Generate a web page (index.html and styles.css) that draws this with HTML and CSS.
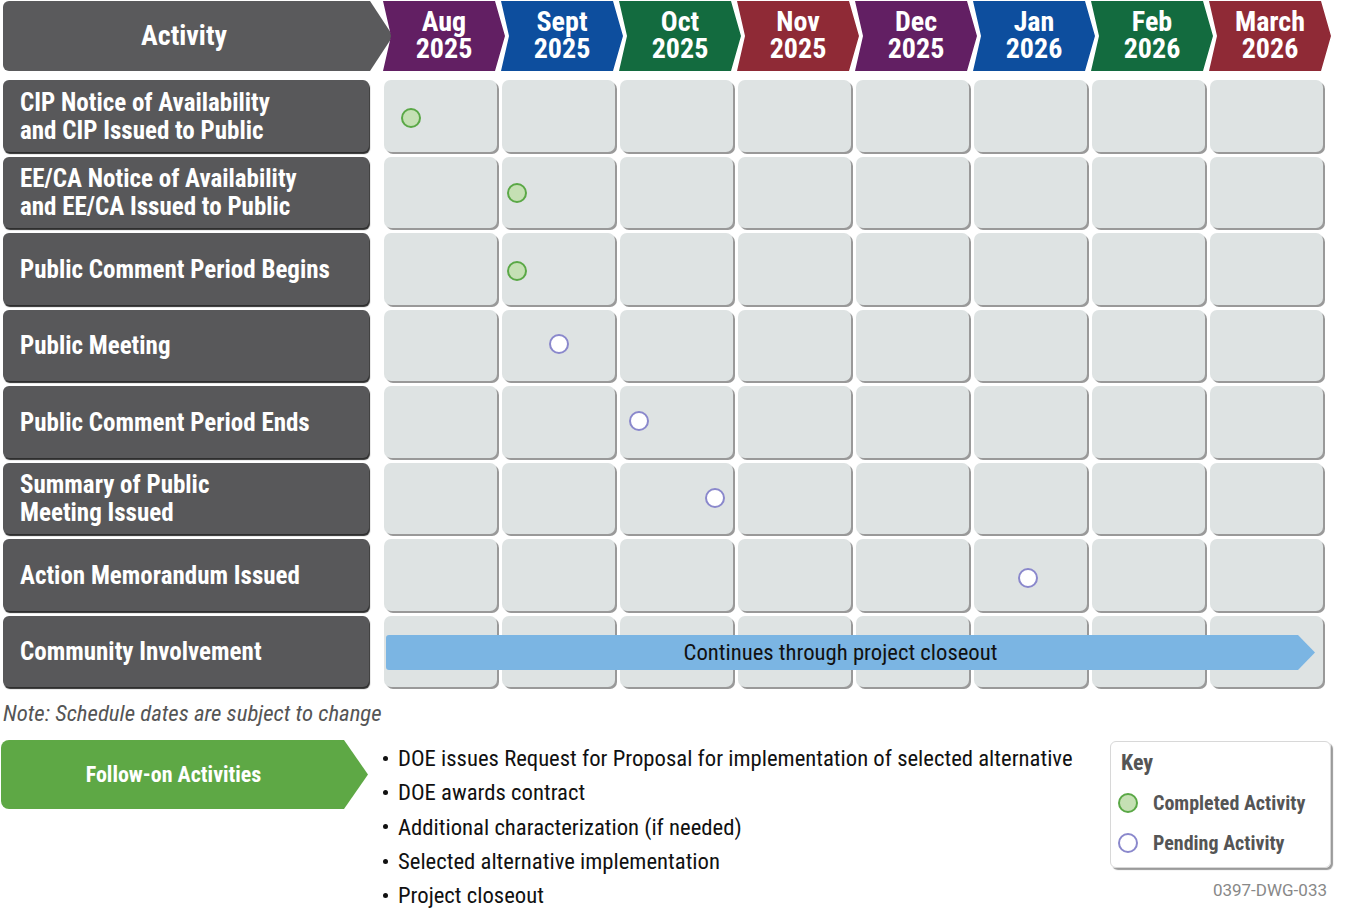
FILE: index.html
```html
<!DOCTYPE html>
<html>
<head>
<meta charset="utf-8">
<link rel="stylesheet" href="styles.css">
</head>
<body>
<div class="page">
  <div class="header">
    <div class="hd-activity">Activity</div>
    <div class="month purple"><span>Aug</span><span>2025</span></div>
    <div class="month blue"><span>Sept</span><span>2025</span></div>
    <div class="month green"><span>Oct</span><span>2025</span></div>
    <div class="month red"><span>Nov</span><span>2025</span></div>
    <div class="month purple"><span>Dec</span><span>2025</span></div>
    <div class="month blue"><span>Jan</span><span>2026</span></div>
    <div class="month green"><span>Feb</span><span>2026</span></div>
    <div class="month red"><span>March</span><span>2026</span></div>
  </div>

  <div class="grid">
    <div class="label">CIP Notice of Availability<br>and CIP Issued to Public</div>
    <div class="cell"><span class="dot done" style="left:17px;top:28px"></span></div>
    <div class="cell"></div><div class="cell"></div><div class="cell"></div><div class="cell"></div><div class="cell"></div><div class="cell"></div><div class="cell"></div>

    <div class="label">EE/CA Notice of Availability<br>and EE/CA Issued to Public</div>
    <div class="cell"></div>
    <div class="cell"><span class="dot done" style="left:5px;top:26px"></span></div>
    <div class="cell"></div><div class="cell"></div><div class="cell"></div><div class="cell"></div><div class="cell"></div><div class="cell"></div>

    <div class="label">Public Comment Period Begins</div>
    <div class="cell"></div>
    <div class="cell"><span class="dot done" style="left:5px;top:28px"></span></div>
    <div class="cell"></div><div class="cell"></div><div class="cell"></div><div class="cell"></div><div class="cell"></div><div class="cell"></div>

    <div class="label">Public Meeting</div>
    <div class="cell"></div>
    <div class="cell"><span class="dot pend" style="left:47px;top:24px"></span></div>
    <div class="cell"></div><div class="cell"></div><div class="cell"></div><div class="cell"></div><div class="cell"></div><div class="cell"></div>

    <div class="label">Public Comment Period Ends</div>
    <div class="cell"></div><div class="cell"></div>
    <div class="cell"><span class="dot pend" style="left:9px;top:25px"></span></div>
    <div class="cell"></div><div class="cell"></div><div class="cell"></div><div class="cell"></div><div class="cell"></div>

    <div class="label">Summary of Public<br>Meeting Issued</div>
    <div class="cell"></div><div class="cell"></div>
    <div class="cell"><span class="dot pend" style="left:85px;top:25px"></span></div>
    <div class="cell"></div><div class="cell"></div><div class="cell"></div><div class="cell"></div><div class="cell"></div>

    <div class="label">Action Memorandum Issued</div>
    <div class="cell"></div><div class="cell"></div><div class="cell"></div><div class="cell"></div><div class="cell"></div>
    <div class="cell"><span class="dot pend" style="left:44px;top:29px"></span></div>
    <div class="cell"></div><div class="cell"></div>

    <div class="label">Community Involvement</div>
    <div class="cell"></div><div class="cell"></div><div class="cell"></div><div class="cell"></div><div class="cell"></div><div class="cell"></div><div class="cell"></div><div class="cell"></div>
    <div class="arrow">Continues through project closeout</div>
  </div>

  <div class="note">Note: Schedule dates are subject to change</div>

  <div class="bottom">
    <div class="follow">Follow-on Activities</div>
    <ul class="bullets">
      <li>DOE issues Request for Proposal for implementation of selected alternative</li>
      <li>DOE awards contract</li>
      <li>Additional characterization (if needed)</li>
      <li>Selected alternative implementation</li>
      <li>Project closeout</li>
    </ul>
    <div class="side">
      <div class="key">
        <div class="key-title">Key</div>
        <div class="key-item"><span class="kdot done"></span>Completed Activity</div>
        <div class="key-item"><span class="kdot pend"></span>Pending Activity</div>
      </div>
      <div class="dwg">0397-DWG-033</div>
    </div>
  </div>
</div>
</body>
</html>
```

FILE: styles.css
```css
* { box-sizing: border-box; }
body {
  margin: 0;
  background: #fff;
  font-family: "Roboto Condensed", "Liberation Sans Narrow", "DejaVu Sans Condensed", Roboto, sans-serif;
  font-stretch: condensed;
}
.page {
  width: 1350px;
  height: 914px;
  padding: 1px 0 0 3px;
  overflow: hidden;
}
.header {
  display: flex;
  height: 70px;
}
.hd-activity {
  width: 390px;
  height: 70px;
  background: #5a5a5c;
  border-radius: 6px;
  clip-path: polygon(0 0, 367px 0, 390px 50%, 367px 100%, 0 100%);
  color: #fff;
  font-weight: 700;
  font-size: 28px;
  display: flex;
  align-items: center;
  justify-content: center;
  padding: 0 28px 2px 0;
}
.month {
  width: 122px;
  height: 70px;
  margin-left: -4px;
  clip-path: polygon(0 0, 112px 0, 122px 50%, 112px 100%, 0 100%, 8px 50%);
  color: #fff;
  font-weight: 700;
  font-size: 28px;
  line-height: 27px;
  display: flex;
  flex-direction: column;
  align-items: center;
  justify-content: center;
  padding: 0 8px 2px 8px;
}
.month span { display: block; height: 27px; }
.hd-activity + .month { margin-left: -10px; }
.purple { background: #621f63; }
.blue { background: #0d4e9e; }
.green { background: #136b3f; }
.red { background: #8f2a36; }

.grid {
  position: relative;
  margin-top: 9px;
  display: grid;
  grid-template-columns: 376px repeat(8, 113px);
  grid-auto-rows: 71.5px;
  gap: 5px;
}
.label {
  width: 366px;
  background: #58585a;
  border-radius: 6px;
  box-shadow: 1px 2px 1px #2e2e2e;
  color: #fff;
  font-weight: 700;
  font-size: 25px;
  line-height: 28px;
  display: flex;
  align-items: center;
  padding: 2px 0 0 17px;
}
.cell {
  position: relative;
  background: #dee3e3;
  border-radius: 7px;
  box-shadow: 2px 2px 0 #999;
}
.dot, .kdot {
  width: 20px;
  height: 20px;
  border-radius: 50%;
  border: 2px solid;
  flex: none;
}
.dot { position: absolute; }
.done { background: #c5e0b4; border-color: #5aa846; }
.pend { background: #fff; border-color: #8a88cc; }
.arrow {
  position: absolute;
  grid-column: 2 / 10;
  grid-row: 8;
  top: 19.5px;
  left: 2px;
  width: 929px;
  height: 35px;
  background: #7bb5e3;
  border-radius: 3px;
  clip-path: polygon(0 0, 912px 0, 929px 50%, 912px 100%, 0 100%);
  color: #111;
  font-size: 22.7px;
  display: flex;
  align-items: center;
  justify-content: center;
  padding-right: 20px;
}
.note {
  margin-top: 15px;
  font-size: 22.8px;
  line-height: 24px;
  font-style: italic;
  color: #555;
}
.bottom {
  display: flex;
  margin-top: 14px;
  margin-left: -2px;
}
.follow {
  width: 367px;
  height: 69px;
  background: #5ea845;
  border-radius: 8px;
  clip-path: polygon(0 0, 343px 0, 367px 50%, 343px 100%, 0 100%);
  color: #fff;
  font-weight: 700;
  font-size: 22px;
  display: flex;
  align-items: center;
  justify-content: center;
  padding-right: 22px;
}
.bullets {
  list-style: none;
  margin: 2px 0 0 15px;
  padding: 0;
  font-size: 22.7px;
  line-height: 34.3px;
  color: #111;
}
.bullets li {
  height: 34.3px;
  display: flex;
  align-items: center;
}
.bullets li::before {
  content: "";
  flex: none;
  width: 5px;
  height: 5px;
  border-radius: 50%;
  background: #111;
  margin: 0 10px 2px 0;
}
.side {
  margin-left: auto;
  margin-right: 19px;
  display: flex;
  flex-direction: column;
  align-items: flex-end;
}
.key {
  width: 221px;
  height: 127px;
  margin-top: 1px;
  padding-top: 1px;
  border: 1px solid #d8d8d8;
  border-radius: 6px;
  box-shadow: 2px 2px 1px #9a9a9a;
  color: #555;
  font-weight: 700;
}
.key-title {
  height: 40px;
  line-height: 40px;
  font-size: 22px;
  padding-left: 10px;
}
.key-item {
  height: 40px;
  display: flex;
  align-items: center;
  gap: 15px;
  padding-left: 7px;
  font-size: 20px;
}
.dwg {
  margin-top: 12px;
  margin-right: 4px;
  font-family: Roboto, sans-serif;
  font-stretch: normal;
  font-size: 17px;
  line-height: 20px;
  color: #888;
}
```
